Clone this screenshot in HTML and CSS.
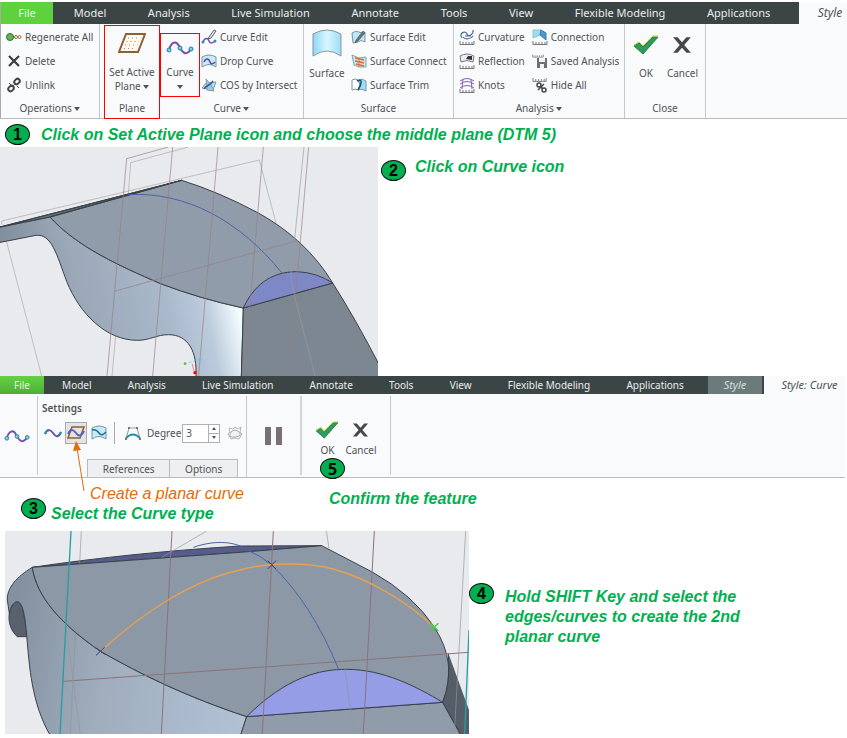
FILE: index.html
```html
<!DOCTYPE html>
<html lang="en">
<head>
	<meta charset="utf-8">
	<title>Style: planar curve</title>
	<link rel="stylesheet" href="styles.css">
</head>
<body>

<!-- icons used more than once -->
<svg class="sprite" width="0" height="0">
	<symbol id="i-curve" viewBox="0 0 28 16">
		<path d="M3 11C5 3 10 1 13 7S20 18 25 10" fill="none" stroke="#7d4fae" stroke-width="2"/>
		<g fill="#7fd0ea" stroke="#1f7f9f"><circle cx="3" cy="11" r="2"/><circle cx="14" cy="9" r="2"/><circle cx="25" cy="10" r="2"/></g>
	</symbol>
	<symbol id="i-check" viewBox="0 0 26 20">
		<path d="M1 11L6 8L10 12L20 2H25L10 19Z" fill="#2f9a62" stroke="#2b7b34" stroke-width="1"/>
		<path d="M1 10L6 7L10 11L20 1H25" fill="none" stroke="#b5dc28" stroke-width="1"/>
	</symbol>
	<symbol id="i-cross" viewBox="0 0 18 16">
		<path d="M1 1H5L9 5.500L13 1H17L11 8L17 15H13L9 10.500L5 15H1L7 8Z" fill="#43484c"/>
	</symbol>
	<symbol id="i-ruler" viewBox="0 0 16 4">
		<path d="M1 0V3.500H15V0M4 1V3M7 1V3M10 1V3M13 1V3" fill="none" stroke="#777" stroke-width="1"/>
	</symbol>
</svg>

<header class="ribbon">
	<nav class="tabs">
		<a class="file" href="#">File</a>
		<div class="menu">
			<a href="#">Model</a>
			<a href="#">Analysis</a>
			<a href="#">Live Simulation</a>
			<a href="#">Annotate</a>
			<a href="#">Tools</a>
			<a href="#">View</a>
			<a href="#">Flexible Modeling</a>
			<a href="#">Applications</a>
		</div>
		<a class="current" href="#">Style</a>
	</nav>
	<div class="groups">
		<section class="group operations">
			<div class="tools">
				<div class="list">
					<button><svg viewBox="0 0 16 16"><circle cx="4" cy="8" r="3.500" fill="#5cb85a" stroke="#2d6e2d"/><g fill="none" stroke="#a06a3a"><circle cx="10" cy="8" r="1.500"/><circle cx="13.500" cy="8" r="1.500"/></g></svg>Regenerate All</button>
					<button><svg viewBox="0 0 16 16"><path d="M3 3L13 13M13 3L3 13" stroke="#3d3d3d" stroke-width="2.200"/></svg>Delete</button>
					<button><svg viewBox="0 0 16 16"><g fill="none" stroke="#444" stroke-width="2"><ellipse cx="11" cy="4.500" rx="3" ry="2.300" transform="rotate(-45 11 4.500)"/><ellipse cx="5" cy="11.500" rx="3" ry="2.300" transform="rotate(-45 5 11.500)"/><path d="M6 10L10 6M3 6L5 8M11 9L13 11" stroke-width="1"/></g></svg>Unlink</button>
				</div>
			</div>
			<h2>Operations <i class="caret"></i></h2>
		</section>
		<section class="group plane">
			<div class="tools">
				<button class="big">
					<svg viewBox="0 0 28 20"><path d="M8 1H27L20 19H1Z" fill="#fffaf0" stroke="#8a6233" stroke-width="2"/><path d="M10 5H22M8.500 8.500H21M7 12H19.500M6 15.500H18" stroke="#a98a62" stroke-dasharray="1 3"/></svg>
					<span>Set Active<br>Plane <i class="caret"></i></span>
				</button>
			</div>
			<h2>Plane</h2>
		</section>
		<section class="group curve">
			<div class="tools">
				<button class="big marked">
					<svg><use href="#i-curve"/></svg>
					<span>Curve<br><i class="caret"></i></span>
				</button>
				<div class="list">
					<button><svg viewBox="0 0 16 16"><path d="M2 13C4 8 7 9 8 12S12 14 14 12" fill="none" stroke="#7d4fae" stroke-width="1.500"/><path d="M8 8L13 1L15 2L10 9L7 10Z" fill="#e6eef2" stroke="#53606a"/><circle cx="2" cy="13" r="1.500" fill="#2f8fb3"/><circle cx="14" cy="12" r="1.500" fill="#2f8fb3"/></svg>Curve Edit</button>
					<button><svg viewBox="0 0 16 16"><path d="M1 4Q8 0 15 4V14Q8 9 1 14Z" fill="#c6ebf8" stroke="#7b95a3"/><path d="M3 9C5 4 8 6 9 9S12 11 14 9" fill="none" stroke="#5d4aa0" stroke-width="1.500"/></svg>Drop Curve</button>
					<button><svg viewBox="0 0 16 16"><path d="M1 11L5 6L15 5L12 13Z" fill="#b5dff0" stroke="#8799a5"/><path d="M5 2Q10 6 13 14L6 13Q6 8 5 2Z" fill="#9dcbe4" stroke="#8799a5"/><path d="M3 12C5 8 9 9 12 4" fill="none" stroke="#2b5fa5" stroke-width="1.500"/></svg>COS by Intersect</button>
				</div>
			</div>
			<h2>Curve <i class="caret"></i></h2>
		</section>
		<section class="group surface">
			<div class="tools">
				<button class="big">
					<svg viewBox="0 0 30 28"><defs><linearGradient id="sky"><stop offset="0" stop-color="#8fd6f3"/><stop offset=".5" stop-color="#d8f7ff"/><stop offset="1" stop-color="#9edcf5"/></linearGradient></defs><path d="M1 5Q15 -3 29 5V27Q15 17 1 27Z" fill="url(#sky)" stroke="#8a979e"/></svg>
					<span>Surface</span>
				</button>
				<div class="list">
					<button><svg viewBox="0 0 16 16"><path d="M1 4Q5 1 8 3T14 3V13Q10 10 7 13L2 14Z" fill="#bfe8f7" stroke="#7b95a3"/><path d="M5 11L12 2L14 4L7 12L4 14Z" fill="#66737d" stroke="#444" stroke-width=".5"/></svg>Surface Edit</button>
					<button><svg viewBox="0 0 16 16"><path d="M1 2L8 5V14L3 12ZM8 5L15 4V14L8 14" fill="#bfe8f7" stroke="#8aa2ad"/><path d="M4 5L13 7M4 8L13 10M5 11L13 13" stroke="#e06c2d" stroke-width="1.500"/></svg>Surface Connect</button>
					<button><svg viewBox="0 0 16 16"><path d="M1 3Q4 1 7 3L9 8L7 13Q4 11 1 13Z" fill="#fff" stroke="#7b95a3"/><path d="M7 3Q12 1 15 4V14Q11 11 7 13L10 8Z" fill="#9edff6" stroke="#7b95a3"/><path d="M6 4Q11 2 10 6T7 13" fill="none" stroke="#1d4d70" stroke-width="1.500"/></svg>Surface Trim</button>
				</div>
			</div>
			<h2>Surface</h2>
		</section>
		<section class="group analysis">
			<div class="tools">
				<div class="list">
					<button><svg viewBox="0 0 16 16"><path d="M3 9C-1 4 7 1 8 5S15 5 14 1M4 8C6 11 12 10 14 7M6 7H12" fill="none" stroke="#4a6f93" stroke-width="1.200"/><use href="#i-ruler" y="12" width="16" height="4"/></svg>Curvature</button>
					<button><svg viewBox="0 0 16 16"><path d="M1 3Q8 -1 15 3L14 9Q8 6 2 9Z" fill="#e8edf0" stroke="#777"/><path d="M9 3L13 3V7L7 6Z" fill="#333"/><use href="#i-ruler" y="12" width="16" height="4"/></svg>Reflection</button>
					<button><svg viewBox="0 0 16 16"><path d="M1 4Q8 -1 15 4M1 7Q8 2 15 7M1 11Q8 6 15 11M4 2L3 12M12 2L13 12" fill="none" stroke="#8762b5"/><use href="#i-ruler" y="12" width="16" height="4"/></svg>Knots</button>
				</div>
				<div class="list">
					<button><svg viewBox="0 0 16 16"><path d="M1 1H9L8 6L1 9Z" fill="#9adcf4" stroke="#8fc3d6"/><path d="M9 1L14 4V11L8 6Z" fill="#4e9ac8" stroke="#3b7dad"/><use href="#i-ruler" y="12" width="16" height="4"/></svg>Connection</button>
					<button><svg viewBox="0 0 16 16"><use href="#i-ruler" y="1" width="12" height="4"/><path d="M5 5H15V15H5Z" fill="#6b7175"/><path d="M7 5H13V9H7ZM8 11H12V15H8Z" fill="#f2f4f5"/></svg>Saved Analysis</button>
					<button><svg viewBox="0 0 16 16"><use href="#i-ruler" y="1" width="15" height="4"/><g fill="none" stroke="#444" stroke-width="1.500"><circle cx="7" cy="8" r="2"/><circle cx="12" cy="13" r="2"/><path d="M8 9L11 12M6 13L12 7"/></g></svg>Hide All</button>
				</div>
			</div>
			<h2>Analysis <i class="caret"></i></h2>
		</section>
		<section class="group close">
			<div class="tools">
				<button class="big"><svg><use href="#i-check"/></svg><span>OK</span></button>
				<button class="big cancel"><svg><use href="#i-cross"/></svg><span>Cancel</span></button>
			</div>
			<h2>Close</h2>
		</section>
	</div>
</header>

<main>
	<p class="step first"><b class="badge">1</b><span>Click on Set Active Plane icon and choose the middle plane (DTM 5)</span></p>

	<div class="row">
		<svg class="model" width="378" height="229" viewBox="0 87 1134 687">
			<defs>
				<linearGradient id="side1" gradientUnits="userSpaceOnUse" x1="0" y1="500" x2="740" y2="330">
					<stop offset="0" stop-color="#7c8997"/><stop offset=".28" stop-color="#99a7b7"/><stop offset=".62" stop-color="#a9b8ca"/><stop offset=".77" stop-color="#bccbdc"/><stop offset=".9" stop-color="#f5fdff"/>
				</linearGradient>
			</defs>
			<rect y="87" width="1134" height="687" fill="#e9eaee"/>
			<path d="M5 320V309L778 126L828 315M18 365L125 774M385 230L392 134L565 87M385 230L336 774" fill="none" stroke="#a8a8a8" stroke-width="2"/>
			<g stroke="#3a4148" stroke-width="3" stroke-linejoin="round">
				<path d="M-4 328L150 297C230 385 352 441 482 497Q600 542 730 570L724 778H588C592 700 565 650 505 650C470 650 450 667 412 667C320 667 240 590 200 490C170 410 155 347 108 352L-4 374Z" fill="url(#side1)"/>
				<path d="M0 327L545 187L150 297Z" fill="#66727f"/>
				<path d="M150 297L545 187Q660 223 775 285Q920 365 998 495L730 570Q600 542 482 497C352 441 230 385 150 297Z" fill="#919cab"/>
				<path d="M730 570L998 495Q1065 600 1140 745V780H724Z" fill="#7d8791"/>
				<path d="M730 570C760 505 810 461 890 461Q950 463 998 495Z" fill="#7f88c6"/>
			</g>
			<path d="M0 327L545 187L150 297" fill="none" stroke="#3a4148" stroke-width="3"/>
			<path d="M385 230C560 220 720 310 845 464" fill="none" stroke="#4766a0" stroke-width="3"/>
			<g fill="none" stroke="#967f84" stroke-width="2">
				<path d="M505 87L380 122L321 774M518 87L458 774M654 87L596 774M790 87L732 774M926 87L866 765L825 774M343 520L895 367"/>
				<path d="M912 87L872 480M872 480L885 540L945 774" stroke="#9a9a9e"/>
			</g>
			<path d="M554 737L602 724" stroke="#48cfe0" stroke-width="2" stroke-dasharray="8 5"/>
			<path d="M576 736L584 765" stroke="#e78b8b" stroke-width="3"/>
			<circle cx="555" cy="737" r="4" fill="#4bc64b"/><circle cx="601" cy="724" r="4" fill="#3fd3ea"/><circle cx="585" cy="764" r="5" fill="#f00"/>
		</svg>
		<p class="step second"><b class="badge">2</b><span>Click on Curve icon</span></p>
	</div>

	<div class="ribbon small">
		<nav class="tabs">
			<a class="file" href="#">File</a>
			<div class="menu">
				<a href="#">Model</a>
				<a href="#">Analysis</a>
				<a href="#">Live Simulation</a>
				<a href="#">Annotate</a>
				<a href="#">Tools</a>
				<a href="#">View</a>
				<a href="#">Flexible Modeling</a>
				<a href="#">Applications</a>
			</div>
			<a class="parent" href="#">Style</a>
			<a class="current" href="#">Style: Curve</a>
		</nav>
		<div class="dash">
			<div class="cell type"><svg width="26" height="15"><use href="#i-curve"/></svg></div>
			<div class="cell settings">
				<h3>Settings</h3>
				<div class="options">
					<button aria-label="Free curve"><svg viewBox="0 0 18 16"><path d="M1 9C4 3 7 5 9 8S14 14 17 7" fill="none" stroke="#6d55ab" stroke-width="2"/><path d="M1 9C2 6 4 5 5 5M14 11Q16 10 17 7" fill="none" stroke="#2a8dad" stroke-width="2"/></svg></button>
					<button class="pressed" aria-label="Planar curve"><svg viewBox="0 0 18 16"><path d="M5 2H17L13 13H1Z" fill="none" stroke="#8a6233" stroke-width="1.500"/><path d="M1 9C4 3 7 5 9 8S14 12 17 6" fill="none" stroke="#5d5fc0" stroke-width="2"/></svg></button>
					<button aria-label="Curve on surface"><svg viewBox="0 0 18 16"><path d="M2 3Q9 -1 16 3V14Q9 9 2 14Z" fill="#c6ebf8" stroke="#7b95a3"/><path d="M2 5C5 4 7 5 9 8S13 10 16 7" fill="none" stroke="#256f96" stroke-width="1.500"/></svg></button>
					<span class="bar"></span>
					<button aria-label="Control points"><svg viewBox="0 0 18 16"><path d="M2 14L5 3H13L16 14" fill="none" stroke="#999"/><path d="M2 13Q9 6 16 13" fill="none" stroke="#2a8dad" stroke-width="2"/><path d="M4 2H6V4H4ZM12 2H14V4H12ZM1 13H3V15H1ZM15 13H17V15H15Z" fill="#777"/></svg></button>
					<label for="degree">Degree</label>
					<span class="spin">
						<input id="degree" type="text" value="3">
						<span class="arrows"><button class="up" aria-label="Increase"></button><button class="down" aria-label="Decrease"></button></span>
					</span>
					<button aria-label="Proportional update"><svg viewBox="0 0 18 16"><path d="M3 3L7 4L9 2L12 4L15 2L14 7L16 9L13 14L9 13L5 14L2 9L4 7Z" fill="none" stroke="#b5b5b5"/><path d="M5 7Q9 3 13 7T9 12T5 7" fill="#f2f2f2" stroke="#aaa"/></svg></button>
				</div>
				<div class="panels"><button>References</button><button>Options</button></div>
			</div>
			<div class="cell pause"><button aria-label="Pause"><svg width="20" height="18"><path d="M1 0H7V18H1ZM12 0H18V18H12Z" fill="#786f77"/></svg></button></div>
			<div class="cell confirm">
				<button><svg width="24" height="18"><use href="#i-check"/></svg>OK</button>
				<button><svg width="17" height="18"><use href="#i-cross"/></svg>Cancel</button>
				<b class="badge five">5</b>
			</div>
			<svg class="pointer" width="16" height="52" viewBox="0 0 16 52"><path d="M11 51L4 8" stroke="#e36c0a" stroke-width="1"/><path d="M3 1L8 10L0 11Z" fill="#e36c0a"/></svg>
		</div>
	</div>

	<div class="notes">
		<div class="left">
			<p class="hint">Create a planar curve</p>
			<p class="step third"><b class="badge">3</b><span>Select the Curve type</span></p>
		</div>
		<p class="step confirm-text">Confirm the feature</p>
	</div>

	<div class="row last">
		<svg class="model" width="464" height="203" viewBox="15 33 1392 609">
			<defs>
				<linearGradient id="side2" gradientUnits="userSpaceOnUse" x1="20" y1="420" x2="740" y2="560">
					<stop offset="0" stop-color="#8391a0"/><stop offset=".4" stop-color="#9fadbd"/><stop offset="1" stop-color="#b2c2d5"/>
				</linearGradient>
			</defs>
			<rect x="15" y="33" width="1392" height="609" fill="#e9eaee"/>
			<g stroke="#3a4148" stroke-width="3" stroke-linejoin="round">
				<path d="M80 350H52C18 320 20 262 50 245C70 245 75 300 80 350Z" fill="#59616e"/>
				<path d="M97 142C50 170 20 205 22 240L28 280C32 260 40 245 53 245C70 248 76 300 80 345C88 440 95 550 150 645H722L740 590C560 530 428 466 300 393C180 310 110 230 97 142Z" fill="url(#side2)"/>
				<path d="M97 142C300 112 500 92 720 78L965 77L720 97Z" fill="#565c8c"/>
				<path d="M97 142L720 97L965 77L1115 155Q1240 225 1302 320Q1375 430 1328 547L740 590C560 530 428 466 300 393C180 310 110 230 97 142Z" fill="#8c98a6"/>
				<path d="M740 590L1328 547L1382 645H722Z" fill="#919cab"/>
				<path d="M740 590C860 470 960 448 1040 448C1150 448 1250 500 1328 547Z" fill="#949de6"/>
			</g>
			<path d="M1345 400L1407 570V642H1382L1328 547Q1352 490 1345 400Z" fill="#555d69"/>
			<path d="M1345 400Q1352 490 1328 547L1382 642" fill="none" stroke="#3a4148" stroke-width="3"/>
			<g fill="none" stroke="#8c7377" stroke-width="3">
				<path d="M516 33L484 642M820 33L787 642M1123 33L1090 642M190 484L1407 397"/>
				<path d="M244 33L239 130M226 340L211 642M200 335L241 642M485 112L620 33M979 33L987 85M1397 33L1363 642M1035 448L1061 642" stroke="#92969a" stroke-width="2"/>
			</g>
			<path d="M213 33L180 642M1407 330L1394 642" stroke="#2a9da2" stroke-width="4"/>
			<path d="M580 82C650 58 710 65 745 92Q780 105 815 135Q935 250 1016 448" fill="none" stroke="#4766a0" stroke-width="3"/>
			<path d="M303 393C430 275 580 180 720 150C800 127 920 126 1000 147C1110 178 1220 245 1302 320" fill="none" stroke="#e8a04f" stroke-width="4"/>
			<path d="M288 406L314 382M290 385L314 403M803 122L828 147M803 147L828 122" stroke="#463c6c" stroke-width="3"/>
			<path d="M1291 310L1315 333M1291 333L1315 310" stroke="#3fd03f" stroke-width="4"/>
		</svg>
		<p class="step fourth"><b class="badge">4</b><span>Hold SHIFT Key and select the edges/curves to create the 2nd planar curve</span></p>
	</div>
</main>

</body>
</html>
```
FILE: styles.css
```css
* { box-sizing: border-box; }
body { margin: 0; background: #fff; font-family: "Liberation Sans", Arial, sans-serif; }
button { border: 0; padding: 0; margin: 0; background: none; font: inherit; color: inherit; cursor: pointer; }
p, h2, h3 { margin: 0; }
svg { display: block; flex: none; }
.sprite { position: absolute; }

/* ribbon */
.ribbon { margin-top: 2px; background: #f8fafc; border-bottom: 1px solid #b4bec2; color: #505356; 
		  font-family: "Noto Sans", "Open Sans", sans-serif; font-size: 10px; line-height: 14px; white-space: nowrap; }
.tabs { display: flex; height: 22px; font-size: 11px; }
.tabs a { display: flex; align-items: center; justify-content: center; color: #e9eded; text-decoration: none; }
.tabs .file { width: 53px; background: #5fd13c; border-left: 1px solid #aaa; }
.menu { display: flex; flex: 1; padding-right: 8px; background: #3c4546; }
.menu a { flex: 1 1 auto; }
.tabs .current { width: 48px; color: #505356; font-size: 12px; font-style: italic; background: #f8fafc; padding-left: 14px; }
.tabs .parent { width: 56px; background: #6b7b7b; color: #d6dddd; font-size: 11px; font-style: italic; border-right: 2px solid #3c4546; }

.groups { display: grid; grid-template-columns: 99px 60px 144px 150px 171px 81px; height: 94px; border-left: 1px solid #aaa; }
.group { display: flex; flex-direction: column; border-right: 1px solid #c4c8cb; padding-top: 1px; }
.group h2 { font-size: 10px; font-weight: normal; text-align: center; line-height: 20px; }
.tools { display: flex; height: 73px; }
.list { display: flex; flex-direction: column; }
.list button { display: flex; align-items: center; gap: 3px; height: 24px; }
.list svg { width: 16px; height: 16px; }
.caret { display: inline-block; border: 3px solid transparent; border-top: 4px solid #505356; border-bottom: 0; vertical-align: middle; }
.big { display: flex; flex-direction: column; align-items: center; }
.big span { line-height: 14px; }
.big svg { width: 28px; height: 20px; }

.operations .list { padding-left: 5px; }
.group.plane { border: 1px solid #f00; margin: 1px 0 -1px 4px; padding: 0; }
.plane .tools { height: 72px; }
.plane .big { flex: 1; padding-top: 7px; gap: 12px; }
.plane .big span { margin: 0 -4px; }
.marked { width: 40px; height: 64px; margin-top: 8px; border: 1px solid #f00; }
.marked svg { margin: 3px 0 8px; }
.curve .list { padding-left: 1px; }
.surface .big { width: 46px; padding-top: 4px; gap: 9px; }
.surface .big svg { width: 30px; height: 28px; }
.surface .list { padding-left: 1px; }
.analysis .tools { gap: 7px; }
.analysis .list { padding-left: 5px; }
.analysis .list + .list { padding-left: 0; }
.close .tools { justify-content: center; gap: 7px; }
.close .big { padding-top: 10px; gap: 11px; }
.cancel svg { width: 20px; height: 20px; }

/* steps */
.step { display: flex; color: #00b050; font-size: 16px; font-weight: bold; font-style: italic; line-height: 20px; }
.badge { display: flex; flex: none; align-items: center; justify-content: center; width: 25px; height: 21px; 
		 border: 1px solid #111; border-radius: 50%; background: #00b050; color: #000; font-size: 16px; font-style: normal; line-height: 16px; }
.first { height: 28px; padding: 5px 0 0 5px; gap: 11px; }
.first span { padding-top: 1px; }
.row { display: flex; }
.second { padding: 13px 0 0 3px; gap: 9px; }
.second span { margin-top: -3px; }

/* dashboard */
.small { margin: 0 2px 0 0; border-color: #bbb; }
.small .tabs { height: 18px; font-size: 10px; }
.small .file { width: 44px; border: 0; background: linear-gradient(#66cf45, #4caf35); }
.small .menu { padding-right: 6px; }
.small .current { width: 81px; padding-left: 10px; font-size: 11px; }
.dash { display: flex; position: relative; height: 83px; }
.cell { border-right: 1px solid #c4c8cb; margin: 2px 0; }
.type { width: 38px; padding: 32px 0 0 4px; }
.settings { display: flex; flex-direction: column; width: 209px; padding-left: 4px; margin-bottom: 0; }
.settings h3 { font-size: 10px; font-weight: 600; line-height: 24px; }
.options { display: flex; align-items: center; gap: 1px; height: 26px; }
.options svg { width: 18px; height: 16px; }
.options > button { display: flex; flex: none; align-items: center; justify-content: center; width: 22px; height: 22px; }
.options .pressed { background: #e2e4e6; border: 1px solid #aaa; }
.bar { width: 1px; height: 22px; margin: 0 6px 0 3px; background: #aaa; }
.options label { padding-left: 2px; }
.spin { display: flex; width: 38px; height: 19px; margin: 0 3px 0 0; border: 1px solid #b0b0b0; background: #fff; }
.spin input { width: 25px; border: 0; padding: 0 3px; background: none; color: inherit; font: inherit; }
.arrows { flex: 1; border-left: 1px solid #b0b0b0; }
.arrows button { display: flex; align-items: center; justify-content: center; width: 100%; height: 8px; }
.arrows .down { height: 9px; border-top: 1px solid #b0b0b0; }
.arrows button::after { content: ""; border: 2px solid transparent; border-top: 3px solid #505356; border-bottom: 0; }
.arrows .up::after { transform: rotate(180deg); }
.panels { display: flex; margin: auto 8px 0 45px; }
.panels button { flex: 1 1 auto; height: 18px; border: 1px solid #bbb; border-bottom: 0; background: #eeeff1; }
.panels button + button { border-left: 0; }
.pause { width: 55px; padding: 31px 0 0 17px; border-right: 2px solid #d3d6d8; }
.confirm { position: relative; display: flex; justify-content: center; align-items: flex-start; gap: 6px; width: 89px; padding-top: 25px; }
.confirm button { display: flex; flex-direction: column; align-items: center; gap: 4px; }
.five { position: absolute; left: 18px; top: 62px; }
.pointer { position: absolute; left: 73px; top: 46px; }

.notes { display: flex; height: 53px; padding: 6px 0 0 21px; }
.left { width: 308px; }
.hint { padding-left: 69px; color: #e36c0a; font-size: 16px; font-style: italic; line-height: 20px; }
.third { gap: 5px; }
.third .badge { margin-top: -6px; }
.confirm-text { padding-top: 5px; }
.last { padding: 0 0 4px 5px; }
.fourth { padding-top: 52px; gap: 11px; }
.fourth span { max-width: 260px; padding-top: 4px; }
```
